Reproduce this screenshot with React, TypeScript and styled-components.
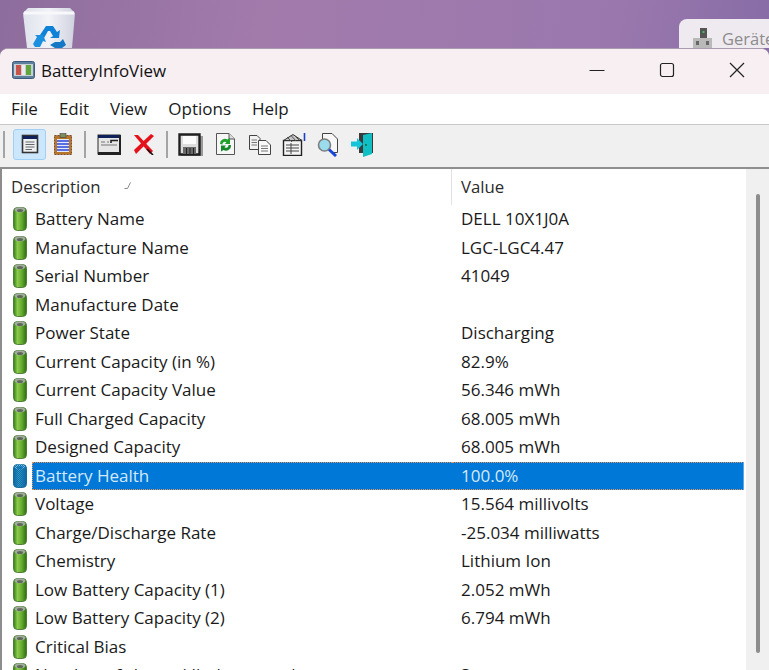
import React from 'react';
import styled, { createGlobalStyle } from 'styled-components';

const FONT = '"Open Sans", "Noto Sans", "Liberation Sans", sans-serif';

const GlobalStyle = createGlobalStyle`
  html, body {
    margin: 0;
    padding: 0;
    background: #8f70a6;
    overflow: hidden;
  }
  * { box-sizing: border-box; }
`;

const Screen = styled.div`
  width: 769px;
  height: 670px;
  display: flex;
  flex-direction: column;
  overflow: hidden;
  font-family: ${FONT};
  background: linear-gradient(100deg, #8d6d9d 0%, #a27bab 30%, #9a78ae 70%, #7a649f 100%);
`;

const Desktop = styled.div`
  height: 48px;
  flex: none;
  display: flex;
  justify-content: space-between;
  align-items: flex-end;
  padding-left: 22px;
  overflow: hidden;
`;

const BinIcon = styled.svg`
  width: 54px;
  height: 40px;
  display: block;
`;

const BackWindow = styled.div`
  width: 90px;
  height: 29px;
  display: flex;
  align-items: flex-start;
  gap: 9px;
  padding: 9px 0 0 13px;
  background: #efeaef;
  border-radius: 8px 0 0 0;
  color: #8c8c8c;
  font-size: 16.5px;
  line-height: 22px;
  white-space: nowrap;
  overflow: hidden;
`;

const Win = styled.div`
  flex: 1;
  min-height: 0;
  display: flex;
  flex-direction: column;
  border-radius: 8px 8px 0 0;
  overflow: hidden;
  border-top: 1px solid #a99cae;
  background: #f0f0f0;
`;

const TitleBar = styled.div`
  height: 45px;
  flex: none;
  display: flex;
  align-items: center;
  padding: 0 0 3px 12px;
  background: #f7eff1;
  color: #111;
`;

const AppTitle = styled.span`
  margin-left: 6px;
  font-size: 16.9px;
`;

const WinControls = styled.div`
  margin-left: auto;
  display: flex;
  align-items: center;
  gap: 54px;
  padding-right: 24px;
`;

const MenuBar = styled.div`
  height: 31px;
  flex: none;
  display: flex;
  align-items: center;
  gap: 21px;
  padding: 0 0 1px 11px;
  background: #fff;
  border-bottom: 1px solid #c8c8c8;
`;

const MenuItem = styled.span`
  font-size: 17px;
  color: #1a1a1a;
`;

const ToolBar = styled.div`
  height: 44px;
  flex: none;
  display: flex;
  align-items: center;
  padding: 0 0 4px 3px;
  background: #f0f0f0;
  border-bottom: 2px solid #8f8f8f;
`;

const ToolSep = styled.div`
  width: 2px;
  height: 27px;
  background: #a4a4a4;
  margin: 0 6px 0 5px;
  &:first-child {
    margin-left: 0;
  }
`;

const ToolButton = styled.div<{ $active?: boolean; $narrow?: boolean }>`
  width: ${p => (p.$narrow ? '33px' : '34.4px')};
  height: 31px;
  display: flex;
  align-items: center;
  justify-content: center;
  border-radius: 3px;
  margin-left: ${p => (p.$active ? '2px' : '0')};
  background: ${p => (p.$active ? '#cce6fc' : 'transparent')};
  border: 1px solid ${p => (p.$active ? '#9fd0f7' : 'transparent')};
`;

const ListArea = styled.div`
  flex: 1;
  min-height: 0;
  display: flex;
  background: #fff;
  border-left: 2px solid #8d8d8d;
`;

const ListBody = styled.div`
  flex: 1;
  min-width: 0;
  overflow: hidden;
`;

const HeaderRow = styled.div`
  height: 36px;
  display: grid;
  grid-template-columns: 450px 1fr;
  background: #fff;
  color: #2b2b2b;
`;

const HeaderCell = styled.div<{ $first?: boolean }>`
  display: flex;
  align-items: center;
  padding: 0 0 2px 9px;
  font-size: 16.8px;
  border-right: ${p => (p.$first ? '1px solid #e2e2e2' : 'none')};
`;

const SortMark = styled.svg`
  width: 8px;
  height: 8px;
  margin-left: 23px;
`;

const Row = styled.div`
  height: 28.5px;
  display: grid;
  grid-template-columns: 450px 1fr;
  align-items: center;
  font-size: 17px;
  color: #1a1a1a;
  white-space: nowrap;
`;

const NameCell = styled.div`
  display: flex;
  align-items: center;
  height: 100%;
  padding-left: 10px;
`;

const Label = styled.div<{ $selected?: boolean }>`
  flex: 1;
  height: 100%;
  display: flex;
  align-items: center;
  margin-left: 4px;
  padding: 0 0 1px ${p => (p.$selected ? '2px' : '3px')};
  ${p =>
    p.$selected
      ? `background: #0078d7; color: #d6e9fa; border-top: 1px dotted #e0955a; border-bottom: 1px dotted #e0955a; border-left: 1px dotted #e0955a;`
      : ''}
`;

const ValueCell = styled.div<{ $selected?: boolean }>`
  height: 100%;
  display: flex;
  align-items: center;
  padding: 0 0 1px 9px;
  ${p =>
    p.$selected
      ? `background: #0078d7; color: #d6e9fa; margin-right: 2px; border-top: 1px dotted #e0955a; border-bottom: 1px dotted #e0955a; border-right: 1px solid #5aa6e6;`
      : ''}
`;

const ScrollTrack = styled.div`
  width: 23px;
  flex: none;
  background: #f0f0f0;
  display: flex;
  justify-content: center;
  padding-top: 25px;
`;

const ScrollThumb = styled.div`
  width: 4px;
  height: 459px;
  background: #8d8d8d;
  border-radius: 2px;
`;

const BatteryIcon = ({ selected }: { selected?: boolean }) => (
  <svg width="16" height="26" viewBox="0 0 16 26" style={{ flex: 'none' }}>
    <defs>
      <linearGradient id="batg" x1="0" x2="1" y1="0" y2="0">
        <stop offset="0" stopColor="#2f7a16" />
        <stop offset="0.3" stopColor="#8ccb4c" />
        <stop offset="0.65" stopColor="#62a92e" />
        <stop offset="1" stopColor="#2c6c0e" />
      </linearGradient>
      <linearGradient id="bats" x1="0" x2="1" y1="0" y2="0">
        <stop offset="0" stopColor="#10607f" />
        <stop offset="0.4" stopColor="#3aa0b0" />
        <stop offset="1" stopColor="#0f5d80" />
      </linearGradient>
      <pattern id="batd" width="2" height="2" patternUnits="userSpaceOnUse">
        <rect width="1" height="1" fill="#0a6fc4" />
        <rect x="1" y="1" width="1" height="1" fill="#0a6fc4" />
      </pattern>
    </defs>
    <rect x="1.5" y="1.5" width="13" height="23" rx="4" fill={selected ? 'url(#bats)' : 'url(#batg)'} stroke={selected ? '#1a6a8c' : '#4f7f38'} />
    <ellipse cx="8" cy="3.8" rx="5.4" ry="2.6" fill={selected ? '#7fc0cc' : '#a3aba0'} />
    <ellipse cx="8" cy="4.4" rx="3" ry="1.5" fill={selected ? '#1e7fa6' : '#5c6a55'} />
    {selected && <rect x="1.5" y="1.5" width="13" height="23" rx="4" fill="url(#batd)" />}
  </svg>
);

const AppIcon = () => (
  <svg width="23" height="18" viewBox="0 0 23 18">
    <rect x="0.5" y="0.5" width="22" height="17" rx="2" fill="#5f7f9f" stroke="#3c5b7c" />
    <rect x="2" y="3" width="19" height="12" fill="#c9ced4" />
    <rect x="4" y="4" width="5" height="10" fill="#c9524a" />
    <rect x="10" y="4" width="3" height="10" fill="#ececec" />
    <rect x="14" y="4" width="5" height="10" fill="#5fa63c" />
  </svg>
);

const BinGraphic = () => (
  <BinIcon viewBox="0 0 54 40">
    <defs>
      <linearGradient id="bing" x1="0" x2="1" y1="0" y2="0">
        <stop offset="0" stopColor="#dfe2ec" />
        <stop offset="0.5" stopColor="#f2f3f8" />
        <stop offset="1" stopColor="#cfd1de" />
      </linearGradient>
    </defs>
    <path d="M1 5 L6 0 H48 L53 5 L50 40 H5 Z" fill="url(#bing)" />
    <path d="M2 5 H52" stroke="#f8f8fb" strokeWidth="3" />
    <path d="M18 27 L24 18 H31 L35 24 L38 22 L37 30 L28 30 L31 28 L28 23 H26 L22 30 Z" fill="#0f82d8" />
    <path d="M11 36 L15 29 L13 27 L21 27 L24 34 L21 33 L18 39 H13 Z" fill="#1b8fe0" />
    <path d="M33 40 V34 L28 37 L33 40 M33 34 H38 L41 31 L44 37 L40 40 H33 Z" fill="#1379c6" />
  </BinIcon>
);

const DeviceIcon = () => (
  <svg width="21" height="20" viewBox="0 0 21 20" style={{ flex: 'none' }}>
    <rect x="8" y="0" width="7" height="10" fill="#555" />
    <rect x="10.5" y="3" width="2" height="2" fill="#36c25a" />
    <rect x="1" y="10" width="19" height="10" fill="#b9b9b9" />
    <rect x="4" y="13" width="3" height="4" fill="#666" />
    <rect x="14" y="13" width="3" height="4" fill="#666" />
  </svg>
);

const ReportIcon = () => (
  <svg width="18" height="20" viewBox="0 0 18 20">
    <rect x="1.5" y="1.5" width="15" height="17" fill="#eef0f2" stroke="#333" strokeWidth="1.6" />
    <rect x="2" y="2" width="14" height="3" fill="#10205a" />
    <path d="M4.5 8 H13.5 M4.5 10.5 H13.5 M4.5 13 H13.5 M4.5 15.5 H11" stroke="#666" />
  </svg>
);

const ClipboardIcon = () => (
  <svg width="20" height="22" viewBox="0 0 20 22">
    <rect x="1.5" y="2.5" width="17" height="19" fill="#b8762a" stroke="#7a4a2a" strokeDasharray="2 1" />
    <rect x="4" y="6" width="12" height="13" fill="#e4e8fb" />
    <path d="M4 8 H16 M4 11 H16 M4 14 H16 M4 17 H16" stroke="#2a46d8" strokeWidth="1.6" />
    <rect x="7" y="0.5" width="6" height="4" fill="#7c8f5a" stroke="#444" strokeWidth="0.6" />
  </svg>
);

const WindowIcon = () => (
  <svg width="24" height="21" viewBox="0 0 24 21">
    <rect x="1" y="1" width="22" height="19" fill="#e6e6e6" stroke="#2b2b2b" />
    <rect x="1" y="1" width="22" height="3" fill="#10205a" />
    <rect x="1" y="18" width="23" height="3" fill="#222" />
    <rect x="22" y="1" width="2" height="20" fill="#222" />
    <path d="M4 8 H8 M10 8 H12 M4 11 H20" stroke="#777" />
    <path d="M14 9 V6.5 H21" stroke="#222" strokeWidth="1.6" fill="none" />
  </svg>
);

const DeleteIcon = () => (
  <svg width="22" height="21" viewBox="0 0 22 21">
    <path d="M1 1 L5 1 L20 17 L17 20 Z" fill="#e6101a" />
    <path d="M21 2 L18 0 L1 16 L3 20 Z" fill="#e6101a" />
    <path d="M14 15 L20 21" stroke="#111" strokeWidth="1.6" />
  </svg>
);

const SaveIcon = () => (
  <svg width="25" height="23" viewBox="0 0 25 23">
    <rect x="3" y="3" width="22" height="20" fill="#9a9a9a" />
    <path d="M1.5 1.5 H21.5 V21.5 H1.5 Z" fill="#dcdcdc" stroke="#1f1f1f" strokeWidth="2.4" />
    <rect x="5" y="3" width="13" height="8" fill="#fbfbfb" />
    <rect x="5" y="14" width="13" height="7" fill="#6a6a6a" />
    <path d="M8.5 15 V21 M12 15 V21 M15.5 15 V21" stroke="#222" />
  </svg>
);

const RefreshIcon = () => (
  <svg width="21" height="24" viewBox="0 0 21 24">
    <path d="M1.5 1.5 H14 L19.5 7 V22.5 H1.5 Z" fill="#f6f6f6" stroke="#555" />
    <path d="M14 1.5 V7 H19.5" fill="#ddd" stroke="#555" />
    <path d="M5 12 A5 5 0 0 1 12.5 7.5 L15 6 V12 H10 L11.5 10.2 A2.5 2.5 0 0 0 7.5 12.5 Z" fill="#1fa12c" />
    <path d="M16 13 A5 5 0 0 1 8.5 18 L6 19.5 V13.5 H11 L9.5 15.3 A2.5 2.5 0 0 0 13.5 13 Z" fill="#16882a" />
  </svg>
);

const CopyIcon = () => (
  <svg width="24" height="21" viewBox="0 0 24 21">
    <path d="M1.5 1.5 H9 L12 4.5 V15.5 H1.5 Z" fill="#f2f2f2" stroke="#444" />
    <path d="M3.5 6 H9 M3.5 8.5 H9 M3.5 11 H9" stroke="#777" />
    <path d="M10.5 6.5 H18 L22.5 11 V20.5 H10.5 Z" fill="#f8f8f8" stroke="#444" />
    <path d="M13 12 H20 M13 14.5 H20 M13 17 H20" stroke="#777" />
  </svg>
);

const PropsIcon = () => (
  <svg width="25" height="23" viewBox="0 0 25 23">
    <rect x="1.5" y="7.5" width="18" height="15" fill="#f4f4f4" stroke="#222" strokeWidth="1.4" />
    <path d="M1.5 7.5 L11 1.5 L20 7.5 Z" fill="#c4c4c4" stroke="#333" />
    <path d="M5 4 L10 9 M9 2.5 L14 8 M13 3 L17 7" stroke="#555" />
    <path d="M4 12 H17 M4 15 H17 M4 18 H17 M9 10 V21" stroke="#444" />
    <path d="M22.5 0 V8" stroke="#1c3fc4" strokeWidth="1.6" />
  </svg>
);

const SearchIcon = () => (
  <svg width="24" height="25" viewBox="0 0 24 25">
    <path d="M5.5 1.5 H15 L20.5 7 V20.5 H14 M5.5 8 V1.5" fill="#f7f7f7" stroke="#444" />
    <circle cx="7.5" cy="13" r="6" fill="#9bdcec" stroke="#7e7e7e" strokeWidth="1.6" />
    <path d="M12 17.5 L19 24" stroke="#1646d8" strokeWidth="3" />
  </svg>
);

const ExitIcon = () => (
  <svg width="24" height="25" viewBox="0 0 24 25">
    <rect x="8" y="1" width="14" height="20" fill="#3a3a3a" />
    <path d="M12 3 L21 1 V22 L12 25 Z" fill="#0fbfc4" />
    <circle cx="15" cy="13" r="1" fill="#063" />
    <path d="M0 9.5 H6 V6 L12 12 L6 18 V14.5 H0 Z" fill="#14c4d8" />
  </svg>
);

const rows: [string, string][] = [
  ['Battery Name', 'DELL 10X1J0A'],
  ['Manufacture Name', 'LGC-LGC4.47'],
  ['Serial Number', '41049'],
  ['Manufacture Date', ''],
  ['Power State', 'Discharging'],
  ['Current Capacity (in %)', '82.9%'],
  ['Current Capacity Value', '56.346 mWh'],
  ['Full Charged Capacity', '68.005 mWh'],
  ['Designed Capacity', '68.005 mWh'],
  ['Battery Health', '100.0%'],
  ['Voltage', '15.564 millivolts'],
  ['Charge/Discharge Rate', '-25.034 milliwatts'],
  ['Chemistry', 'Lithium Ion'],
  ['Low Battery Capacity (1)', '2.052 mWh'],
  ['Low Battery Capacity (2)', '6.794 mWh'],
  ['Critical Bias', ''],
  ['Number of charge/discharge cycles', '3'],
];

const SELECTED = 'Battery Health';

export default function App() {
  return (
    <Screen>
      <GlobalStyle />
      <Desktop>
        <BinGraphic />
        <BackWindow>
          <DeviceIcon />
          Geräte
        </BackWindow>
      </Desktop>
      <Win>
        <TitleBar>
          <AppIcon />
          <AppTitle>BatteryInfoView</AppTitle>
          <WinControls>
            <svg width="16" height="16" viewBox="0 0 16 16">
              <path d="M0.5 8.5 H15.5" stroke="#222" />
            </svg>
            <svg width="16" height="16" viewBox="0 0 16 16">
              <rect x="1.5" y="1.5" width="13" height="13" rx="2" fill="none" stroke="#222" strokeWidth="1.2" />
            </svg>
            <svg width="16" height="16" viewBox="0 0 16 16">
              <path d="M1 1 L15 15 M15 1 L1 15" stroke="#222" strokeWidth="1.2" />
            </svg>
          </WinControls>
        </TitleBar>
        <MenuBar>
          <MenuItem>File</MenuItem>
          <MenuItem>Edit</MenuItem>
          <MenuItem>View</MenuItem>
          <MenuItem>Options</MenuItem>
          <MenuItem>Help</MenuItem>
        </MenuBar>
        <ToolBar>
          <ToolSep />
          <ToolButton $active $narrow><ReportIcon /></ToolButton>
          <ToolButton $narrow><ClipboardIcon /></ToolButton>
          <ToolSep />
          <ToolButton><WindowIcon /></ToolButton>
          <ToolButton><DeleteIcon /></ToolButton>
          <ToolSep />
          <ToolButton><SaveIcon /></ToolButton>
          <ToolButton><RefreshIcon /></ToolButton>
          <ToolButton><CopyIcon /></ToolButton>
          <ToolButton><PropsIcon /></ToolButton>
          <ToolButton><SearchIcon /></ToolButton>
          <ToolButton><ExitIcon /></ToolButton>
        </ToolBar>
        <ListArea>
          <ListBody>
            <HeaderRow>
              <HeaderCell $first>
                Description
                <SortMark viewBox="0 0 8 8">
                  <path d="M6.5 0.5 L3.5 6.5 H0.5" fill="none" stroke="#8a8a8a" />
                </SortMark>
              </HeaderCell>
              <HeaderCell>Value</HeaderCell>
            </HeaderRow>
            {rows.map(([name, value]) => (
              <Row key={name}>
                <NameCell>
                  <BatteryIcon selected={name === SELECTED} />
                  <Label $selected={name === SELECTED}>{name}</Label>
                </NameCell>
                <ValueCell $selected={name === SELECTED}>{value}</ValueCell>
              </Row>
            ))}
          </ListBody>
          <ScrollTrack>
            <ScrollThumb />
          </ScrollTrack>
        </ListArea>
      </Win>
    </Screen>
  );
}
